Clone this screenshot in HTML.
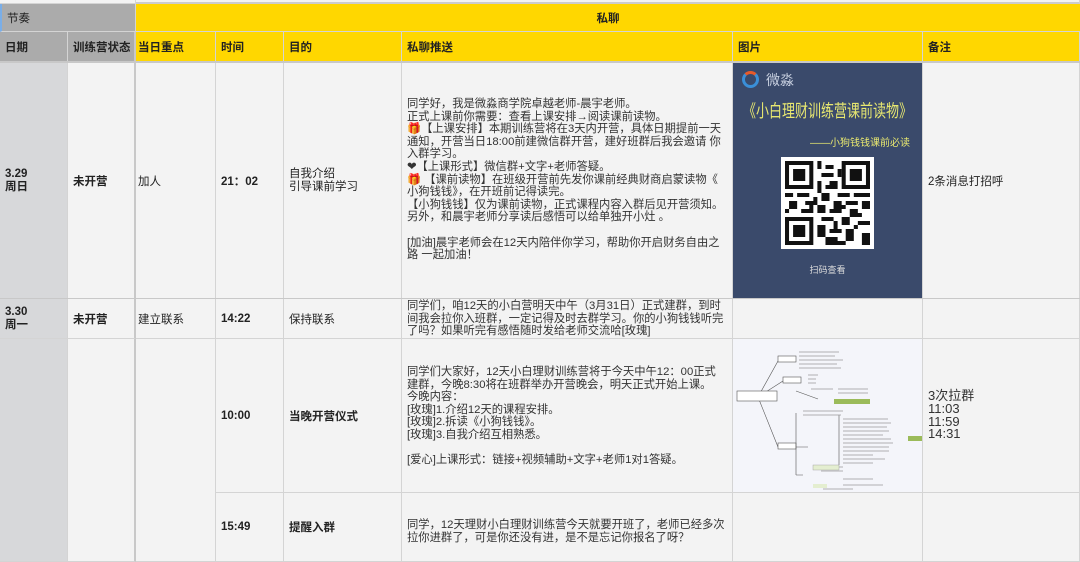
<!DOCTYPE html>
<html><head><meta charset="utf-8"><style>
*{margin:0;padding:0;box-sizing:border-box}
body{width:1080px;height:562px;overflow:hidden;background:#f3f3f3;font-family:"Liberation Sans","Noto Sans CJK SC",sans-serif;color:#222;position:relative}
.c{position:absolute;border-right:1px solid #d4d4d4;border-bottom:1px solid #d4d4d4;font-size:11.5px;display:flex;align-items:center;padding-left:5px;white-space:nowrap}
.y{background:#ffd700}
.g{background:#ababab}
.b{font-weight:bold}
.t{font-size:11.3px;line-height:12.6px;color:#333;display:block;padding-top:0}
.sep{position:absolute;background:#c8c8c8}
</style></head><body>
<div class="c g" style="left:0;top:0;width:136px;height:4px;background:#f3f3f3"></div>
<div class="c" style="left:136px;top:0;width:944px;height:4px;background:#f3f3f3;border-bottom:2px solid #ccc"></div>
<div class="c g" style="left:0;top:4px;width:136px;height:28px;border-left:2px solid #7aaee8">节奏</div>
<div class="c y b" style="left:136px;top:4px;width:944px;height:28px;justify-content:center;padding-left:0;border-right:none">私聊</div>
<div class="c g b" style="left:0;top:32px;width:68px;height:30px">日期</div>
<div class="c g b" style="left:68px;top:32px;width:68px;height:30px;border-right:2px solid #c8c8c8">训练营状态</div>
<div class="c y b" style="left:136px;top:32px;width:80px;height:30px;padding-left:2px">当日重点</div>
<div class="c y b" style="left:216px;top:32px;width:68px;height:30px">时间</div>
<div class="c y b" style="left:284px;top:32px;width:118px;height:30px">目的</div>
<div class="c y b" style="left:402px;top:32px;width:331px;height:30px">私聊推送</div>
<div class="c y b" style="left:733px;top:32px;width:190px;height:30px">图片</div>
<div class="c y b" style="left:923px;top:32px;width:157px;height:30px">备注</div>
<div class="sep" style="left:0;top:61px;width:1080px;height:2px"></div>
<div class="c b" style="left:0;top:63px;width:68px;height:236px;background:#d7d8da;line-height:13px">3.29<br>周日</div>
<div class="c b" style="left:68px;top:63px;width:68px;height:236px;border-right:2px solid #c8c8c8">未开营</div>
<div class="c" style="left:136px;top:63px;width:80px;height:236px;padding-left:2px">加人</div>
<div class="c b" style="left:216px;top:63px;width:68px;height:236px">21：02</div>
<div class="c" style="left:284px;top:63px;width:118px;height:236px;line-height:13px">自我介绍<br>引导课前学习</div>
<div class="c" style="left:402px;top:63px;width:331px;height:236px;padding-top:35px;align-items:flex-start"><div class="t">同学好，我是微淼商学院卓越老师-晨宇老师。<br>正式上课前你需要：查看上课安排→阅读课前读物。<br><span style="color:#e8a020">🎁</span>【上课安排】本期训练营将在3天内开营，具体日期提前一天<br>通知，开营当日18:00前建微信群开营，建好班群后我会邀请 你<br>入群学习。<br>❤【上课形式】微信群+文字+老师答疑。<br><span style="color:#e8a020">🎁</span> 【课前读物】在班级开营前先发你课前经典财商启蒙读物《<br>小狗钱钱》，在开班前记得读完。<br>【小狗钱钱】仅为课前读物，正式课程内容入群后见开营须知。<br>另外，和晨宇老师分享读后感悟可以给单独开小灶 。<br><br>[加油]晨宇老师会在12天内陪伴你学习，帮助你开启财务自由之<br>路 一起加油！</div></div>
<div class="c" style="left:733px;top:63px;width:190px;height:236px;padding:0">
 <div style="position:absolute;left:0;top:0;width:189px;height:235px;background:#3a4a6b">
  <div style="position:absolute;left:9px;top:8px;width:17px;height:17px;border-radius:50%;border:3px solid #3a8fd8;border-top-color:#e85a2a"></div>
  <div style="position:absolute;left:33px;top:7px;color:#c8d0e0;font-size:14px">微淼</div>
  <div style="position:absolute;left:0;width:189px;top:37px;text-align:center;color:#e8e870;font-size:13px;transform:scaleY(1.35)">《小白理财训练营课前读物》</div>
  <div style="position:absolute;right:12px;top:71px;color:#e8e870;font-size:10px">——小狗钱钱课前必读</div>
  <div style="position:absolute;left:48px;top:94px;width:93px;height:92px;background:#fff;padding:4px">
   <svg width="85" height="84" viewBox="0 0 21 21" preserveAspectRatio="none"><rect width="21" height="21" fill="#fff"/>
   <g fill="#111"><path d="M0 0h7v7H0zM14 0h7v7h-7zM0 14h7v7H0z"/></g>
   <g fill="#fff"><path d="M1 1h5v5H1zM15 1h5v5h-5zM1 15h5v5H1z"/></g>
   <g fill="#111"><path d="M2 2h3v3H2zM16 2h3v3h-3zM2 16h3v3H2z"/>
   <path d="M8 0h1v2H8zM10 1h2v1h-2zM9 3h3v1H9zM8 5h1v3H8zM11 5h2v2h-2zM0 8h2v1H0zM3 8h3v1H3zM9 8h2v2H9zM13 8h3v1h-3zM17 8h4v1h-4zM1 10h2v2H1zM5 10h3v1H5zM12 10h2v3h-2zM15 10h3v1h-3zM19 10h2v2h-2zM8 11h2v2H8zM4 12h3v1H4zM16 12h2v2h-2zM9 14h3v1H9zM14 14h2v2h-2zM18 15h3v1h-3zM8 16h2v3H8zM11 17h3v1h-3zM15 17h2v3h-2zM19 18h2v3h-2zM10 19h3v2h-3zM13 20h2v1h-2zM7 9h1v1H7zM10 6h1v1h-1zM13 2h1v2h-1zM6 11h1v1H6zM11 12h1v1h-1zM14 11h1v1h-1zM17 13h2v1h-2zM12 15h1v2h-1zM17 16h1v1h-1zM9 9h1v1H9zM0 12h1v1H0z"/></g></svg>
  </div>
  <div style="position:absolute;left:0;width:189px;top:200px;text-align:center;color:#ddd;font-size:9px">扫码查看</div>
 </div>
</div>
<div class="c" style="left:923px;top:63px;width:157px;height:236px">2条消息打招呼</div>
<div class="sep" style="left:0;top:298px;width:1080px;height:1px"></div>
<div class="c b" style="left:0;top:299px;width:68px;height:40px;background:#d7d8da;line-height:13px">3.30<br>周一</div>
<div class="c b" style="left:68px;top:299px;width:68px;height:40px;border-right:2px solid #c8c8c8">未开营</div>
<div class="c" style="left:136px;top:299px;width:80px;height:40px;padding-left:2px">建立联系</div>
<div class="c b" style="left:216px;top:299px;width:68px;height:40px">14:22</div>
<div class="c" style="left:284px;top:299px;width:118px;height:40px">保持联系</div>
<div class="c" style="left:402px;top:299px;width:331px;height:40px;align-items:flex-start;padding-top:1px"><div class="t">同学们，咱12天的小白营明天中午（3月31日）正式建群，到时<br>间我会拉你入班群，一定记得及时去群学习。你的小狗钱钱听完<br>了吗？如果听完有感悟随时发给老师交流哈[玫瑰]</div></div>
<div class="c" style="left:733px;top:299px;width:190px;height:40px"></div>
<div class="c" style="left:923px;top:299px;width:157px;height:40px"></div>
<div class="c" style="left:0;top:339px;width:68px;height:223px;background:#d7d8da"></div>
<div class="c" style="left:68px;top:339px;width:68px;height:223px;border-right:2px solid #c8c8c8"></div>
<div class="c" style="left:136px;top:339px;width:80px;height:223px"></div>
<div class="c b" style="left:216px;top:339px;width:68px;height:154px">10:00</div>
<div class="c b" style="left:284px;top:339px;width:118px;height:154px">当晚开营仪式</div>
<div class="c" style="left:402px;top:339px;width:331px;height:154px;align-items:flex-start;padding-top:27px"><div class="t">同学们大家好，12天小白理财训练营将于今天中午12：00正式<br>建群，今晚8:30将在班群举办开营晚会，明天正式开始上课。<br>今晚内容：<br>[玫瑰]1.介绍12天的课程安排。<br>[玫瑰]2.拆读《小狗钱钱》。<br>[玫瑰]3.自我介绍互相熟悉。<br><br>[爱心]上课形式：链接+视频辅助+文字+老师1对1答疑。</div></div>
<div class="c" style="left:733px;top:339px;width:190px;height:154px;padding:0">
 <svg width="189" height="153" viewBox="0 0 189 153" style="position:absolute;left:0;top:0">
  <rect width="189" height="153" fill="#f4f5fa"/>
  <g stroke="#555" stroke-width="0.6" fill="none">
   <path d="M25 58 L45 22 M25 58 L50 42 M25 58 L45 108 M63 52 L85 60"/>
   <rect x="4" y="52" width="40" height="10" fill="#fff"/>
   <rect x="45" y="17" width="18" height="6" fill="#fff"/>
   <rect x="50" y="38" width="18" height="6" fill="#fff"/>
   <rect x="45" y="104" width="18" height="6" fill="#fff"/>
   <path d="M63 74 V136 M106 76 V126 M63 108 L75 108 M63 136 L70 136"/>
  </g>
  <g stroke="#999" stroke-width="0.8">
   <path d="M66 13h40M66 17h36M66 21h44M66 25h38M66 29h42M75 36h10M75 40h8M75 44h8M78 50h22M105 50h30M105 54h30M70 72h40M70 76h38M110 80h45M110 84h48M110 88h44M110 92h46M110 96h40M110 100h48M110 104h50M110 108h46M110 112h46M110 116h30M110 120h42M110 124h30M88 128h22M88 132h22M110 140h30M110 146h40M90 150h30"/>
  </g>
  <rect x="101" y="60" width="36" height="5" fill="#9bbb5a"/>
  <rect x="175" y="97" width="14" height="5" fill="#9bbb5a"/>
  <rect x="80" y="126" width="26" height="5" fill="#e4eed0" stroke="#999" stroke-width="0.4"/>
  <rect x="80" y="145" width="14" height="4" fill="#e4eed0"/>
 </svg>
</div>
<div class="c" style="left:923px;top:339px;width:157px;height:154px;font-size:13px;line-height:12.6px;color:#333"><div>3次拉群<br>11:03<br>11:59<br>14:31</div></div>
<div class="c b" style="left:216px;top:493px;width:68px;height:69px">15:49</div>
<div class="c b" style="left:284px;top:493px;width:118px;height:69px">提醒入群</div>
<div class="c" style="left:402px;top:493px;width:331px;height:69px;align-items:flex-start;padding-top:26px"><div class="t">同学，12天理财小白理财训练营今天就要开班了，老师已经多次<br>拉你进群了，可是你还没有进，是不是忘记你报名了呀？</div></div>
<div class="c" style="left:733px;top:493px;width:190px;height:69px"></div>
<div class="c" style="left:923px;top:493px;width:157px;height:69px"></div>
</body></html>
